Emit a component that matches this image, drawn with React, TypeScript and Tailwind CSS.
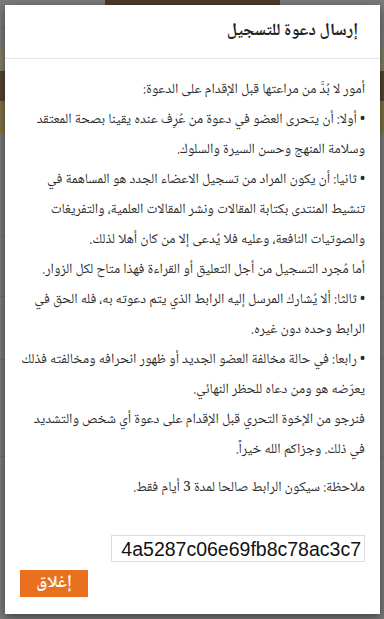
import React from 'react';

const body = [
  { bullet: false, text: 'أمور لا بُدَّ من مراعتها قبل الإقدام على الدعوة:' },
  { bullet: true, text: 'أولا: أن يتحرى العضو في دعوة من عُرِف عنده يقينا بصحة المعتقد وسلامة المنهج وحسن السيرة والسلوك.' },
  {
    bullet: true,
    text: 'ثانيا: أن يكون المراد من تسجيل الاعضاء الجدد هو المساهمة في تنشيط المنتدى بكتابة المقالات ونشر المقالات العلمية، والتفريغات والصوتيات النافعة، وعليه فلا يُدعى إلا من كان أهلا لذلك.',
  },
  { bullet: false, text: 'أما مُجرد التسجيل من أجل التعليق أو القراءة فهذا متاح لكل الزوار.' },
  { bullet: true, text: 'ثالثا: ألا يُشارك المرسل إليه الرابط الذي يتم دعوته به، فله الحق في الرابط وحده دون غيره.' },
  { bullet: true, text: 'رابعا: في حالة مخالفة العضو الجديد أو ظهور انحرافه ومخالفته فذلك يعرّضه هو ومن دعاه للحظر النهائي.' },
  { bullet: false, text: 'فنرجو من الإخوة التحري قبل الإقدام على دعوة أي شخص والتشديد في ذلك. وجزاكم الله خيراً.' },
];

const arabicFont = '"Noto Naskh Arabic", "Amiri", "Scheherazade New", "Noto Sans Arabic", "Liberation Serif", "DejaVu Sans", serif';

function Backdrop() {
  return (
    <div className="flex h-full flex-col">
      <div className="flex h-[28px] border-b border-[#717171]">
        <div className="ml-[105px] h-[5px] w-[175px] bg-[#4a3a29]" />
      </div>
      <div className="mt-[19px] flex h-[86px] flex-col">
        <div className="h-[24px] bg-[#837f6a]" />
        <div className="h-[30px] bg-[#55432f]" />
        <div className="h-[32px] bg-[#7e7446]" />
      </div>
      <div className="mt-[102px] h-px bg-[#707070]" />
      <div className="mt-[60px] h-px bg-[#707070]" />
      <div className="mt-[62px] h-px bg-[#707070]" />
      <div className="mt-[96px] h-px bg-[#707070]" />
    </div>
  );
}

export default function App() {
  return (
    <div className="relative h-[619px] w-[384px] overflow-hidden bg-[#7b7b7b]" style={{ fontFamily: arabicFont }}>
      <Backdrop />
      <div
        dir="rtl"
        className="absolute left-[5px] top-[5px] flex h-[609px] w-[375px] flex-col bg-white shadow-[0_3px_9px_rgba(0,0,0,0.5)]"
      >
        <div className="flex h-[54px] items-center border-b border-[#e5e5e5] pr-[22px]">
          <h3 className="text-[17px] font-bold text-[#222]">إرسال دعوة للتسجيل</h3>
        </div>
        <div className="flex flex-col px-[15px] pt-[16px] text-[14px] leading-[30px] text-[#2b2b2b]">
          {body.map((p, i) => (
            <p key={i}>
              {p.bullet ? '• ' : ''}
              {p.text}
            </p>
          ))}
          <p className="mt-[8px]">ملاحظة: سيكون الرابط صالحا لمدة 3 أيام فقط.</p>
          <div className="mt-[32px] flex">
            <div
              dir="ltr"
              className="flex h-[27px] w-[254px] items-center justify-end overflow-hidden whitespace-nowrap border border-[#dcdcdc] px-[3px] text-[19.5px] text-[#111]"
              style={{ fontFamily: '"Liberation Sans", Arial, sans-serif' }}
            >
              4a5287c06e69fb8c78ac3c7
            </div>
          </div>
        </div>
        <div className="mt-[8px] flex justify-start pl-[15px]" dir="ltr">
          <button className="h-[27px] w-[68px] bg-[#e8701f] text-[17px] font-bold text-white">إغلاق</button>
        </div>
      </div>
    </div>
  );
}
